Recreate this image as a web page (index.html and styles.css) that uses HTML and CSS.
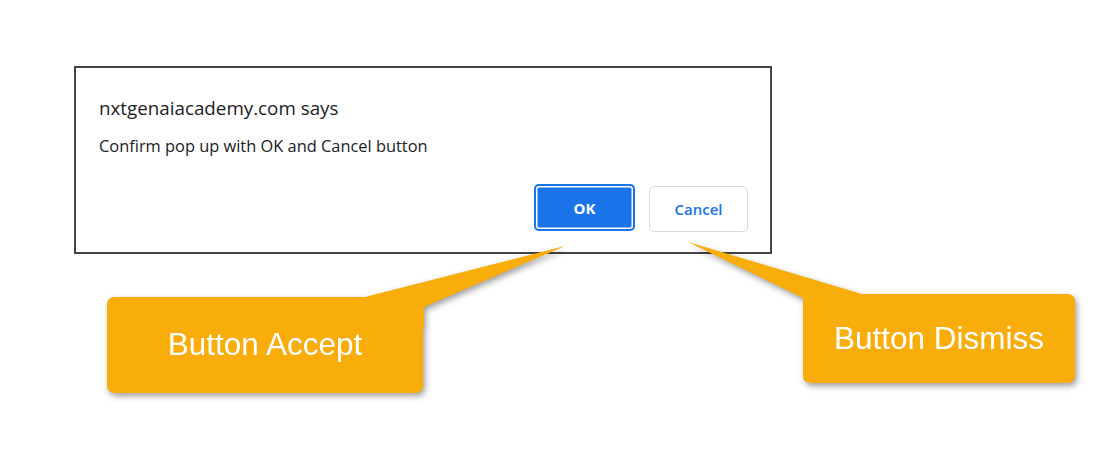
FILE: index.html
```html
<!DOCTYPE html>
<html>
<head>
<meta charset="utf-8">
<link rel="stylesheet" href="styles.css">
</head>
<body>
<div class="canvas">
  <div class="dialog">
    <div class="title">nxtgenaiacademy.com says</div>
    <div class="message">Confirm pop up with OK and Cancel button</div>
    <div class="actions">
      <button class="btn ok">OK</button>
      <button class="btn cancel">Cancel</button>
    </div>
  </div>

  <div class="callout accept">
    <svg class="pointer" width="1" height="1" viewBox="0 0 1 1" aria-hidden="true">
      <polygon points="254,1 458,-51 317,10 317,30 254,30" fill="#f8ad0b"/>
    </svg>
    <span class="label">Button Accept</span>
  </div>

  <div class="callout dismiss">
    <svg class="pointer" width="1" height="1" viewBox="0 0 1 1" aria-hidden="true">
      <polygon points="0,4 -115,-52 62,1 62,30 0,30" fill="#f8ad0b"/>
    </svg>
    <span class="label">Button Dismiss</span>
  </div>
</div>
</body>
</html>
```

FILE: styles.css
```css
html, body {
  margin: 0;
  padding: 0;
  background: #ffffff;
}

.canvas {
  position: relative;
  width: 1109px;
  height: 460px;
  padding: 66px 0 0 74px;
  box-sizing: border-box;
  overflow: hidden;
}

.dialog {
  width: 698px;
  height: 188px;
  box-sizing: border-box;
  border: 2px solid #444444;
  padding: 28px 22px 0 23px;
  display: flex;
  flex-direction: column;
  font-family: "Open Sans", "Noto Sans", sans-serif;
  color: #202124;
}

.title {
  font-size: 18.8px;
  line-height: 24px;
  height: 24px;
}

.message {
  margin-top: 16px;
  font-size: 16.4px;
  line-height: 20px;
  height: 20px;
}

.actions {
  margin-top: 29px;
  display: flex;
  justify-content: flex-end;
  gap: 14px;
}

.btn {
  font-family: "Open Sans", "Noto Sans", sans-serif;
  font-size: 15px;
  font-weight: 600;
  border-radius: 5px;
  padding: 0;
  margin: 0;
  cursor: pointer;
}

.ok {
  width: 101px;
  height: 47px;
  margin-top: -1px;
  background: #1a73e8;
  color: #ffffff;
  font-weight: 700;
  border: none;
  box-shadow: inset 0 0 0 2px #1a73e8, inset 0 0 0 3.5px #ffffff;
}

.cancel {
  width: 99px;
  height: 46px;
  margin-top: 1px;
  background: #ffffff;
  color: #1a73e8;
  border: 1px solid #dadce0;
}

.callout {
  position: absolute;
  background: #f8ad0b;
  border-radius: 7px;
  display: flex;
  align-items: center;
  justify-content: center;
  filter: drop-shadow(2px 3px 3px rgba(0, 0, 0, 0.38));
}

.callout .pointer {
  position: absolute;
  left: 0;
  top: 0;
  overflow: visible;
}

.callout .label {
  position: relative;
  font-family: "Liberation Sans", Arial, sans-serif;
  font-size: 31.5px;
  color: #ffffff;
  line-height: 1;
}

.accept {
  left: 107px;
  top: 297px;
  width: 316px;
  height: 96px;
}

.dismiss {
  left: 803px;
  top: 294px;
  width: 272px;
  height: 89px;
}
```
